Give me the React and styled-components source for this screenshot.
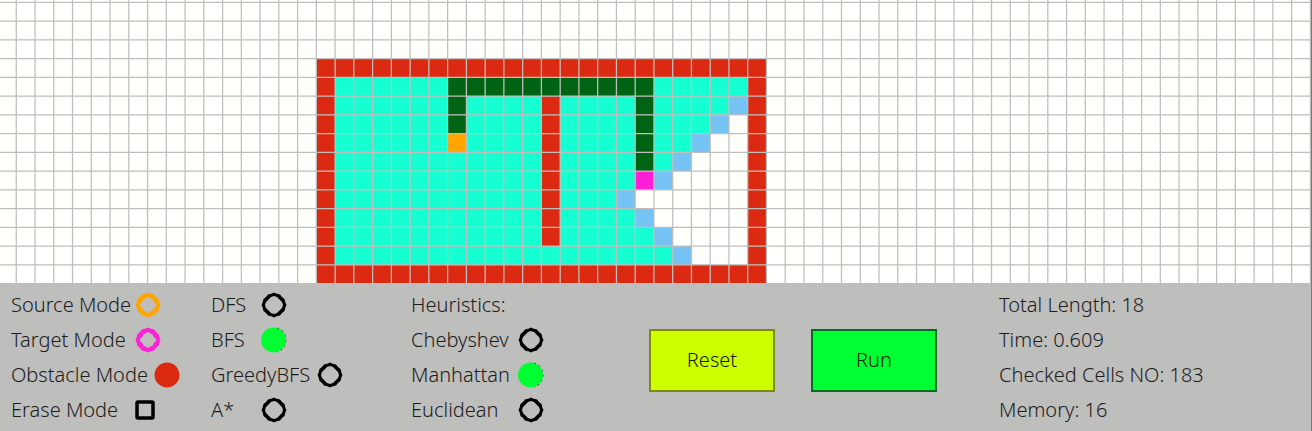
import React, { useState } from "react";
import styled, { createGlobalStyle } from "styled-components";

const GlobalStyle = createGlobalStyle`
  * { box-sizing: border-box; }
  body {
    margin: 0;
    background: #bebebc;
    color: #1c1c1c;
    font-family: "Noto Sans", "Open Sans", sans-serif;
    font-size: 20px;
    font-weight: 300;
  }
`;

const Page = styled.main`
  display: flex;
  flex-direction: column;
  min-height: 100vh;
  border-right: 1px solid #777777;
`;

const Board = styled.svg`
  display: block;
  flex: 1 1 0;
  width: 100%;
  min-height: 240px;
  background: #fffffb;
`;

const Panel = styled.form`
  display: grid;
  grid-template-columns: 200fr 200fr 238fr 350fr 312fr;
  padding: 4px 0 4px 11px;
  background: #bebebc;
`;

const Group = styled.fieldset`
  display: flex;
  flex-direction: column;
  min-width: 0;
  margin: 0;
  padding: 0;
  border: 0;
`;

const Row = styled.div`
  display: flex;
  align-items: center;
  height: 35px;
  line-height: 24px;
  white-space: nowrap;
`;

const Option = styled(Row).attrs({ as: "label" })`
  cursor: pointer;
`;

const Caption = styled.span`
  flex: none;
  width: ${(p) => p.$width}px;
`;

const Mark = styled.span`
  position: relative;
  display: flex;
  flex: none;
  color: ${(p) => p.$color};

  input {
    position: absolute;
    inset: 0;
    width: 100%;
    height: 100%;
    margin: 0;
    opacity: 0;
    cursor: pointer;
  }
`;

const Actions = styled.div`
  display: flex;
  align-items: flex-start;
  gap: 36px;
  padding-top: 42px;
`;

const ActionButton = styled.button`
  width: 126px;
  height: 63px;
  padding: 0 0 2px;
  border: 2px solid ${(p) => p.$edge};
  background: ${(p) => p.$fill};
  color: #102000;
  font: inherit;
  cursor: pointer;
`;

/* Board colours, one letter for each cell state. */
const CELL_COLORS = {
  R: "#dc2a12",
  c: "#16ffd2",
  P: "#006414",
  S: "#ffa500",
  T: "#ff1fd6",
  b: "#75c3f4",
};

const CELLS = [
  "RRRRRRRRRRRRRRRRRRRRRRRR",
  "RccccccPPPPPPPPPPPcccccR",
  "RccccccPccccRccccPccccbR",
  "RccccccPccccRccccPcccb.R",
  "RccccccSccccRccccPccb..R",
  "RcccccccccccRccccPcb...R",
  "RcccccccccccRccccTb....R",
  "RcccccccccccRcccb......R",
  "RcccccccccccRccccb.....R",
  "RcccccccccccRcccccb....R",
  "Rccccccccccccccccccb...R",
  "RRRRRRRRRRRRRRRRRRRRRRRR",
];

const CELL = 30;
const LEFT = 26;
const TOP = 4;
const FIRST_COL = 16;
const FIRST_ROW = 3;
const WIDTH = 2097;
const HEIGHT = 453;

function Grid() {
  const columns = Array.from({ length: 70 }, (_, i) => LEFT + i * CELL);
  const rows = Array.from({ length: 16 }, (_, i) => TOP + i * CELL);
  return (
    <Board
      viewBox={`0 0 ${WIDTH} ${HEIGHT}`}
      preserveAspectRatio="xMidYMax slice"
      role="img"
      aria-label="Search grid"
    >
      {CELLS.flatMap((line, r) =>
        [...line].map((state, c) =>
          CELL_COLORS[state] ? (
            <rect
              key={`${r}-${c}`}
              x={LEFT + (FIRST_COL + c) * CELL}
              y={TOP + (FIRST_ROW + r) * CELL}
              width={CELL}
              height={CELL}
              fill={CELL_COLORS[state]}
            />
          ) : null
        )
      )}
      <g stroke="#bebebc" strokeWidth="2">
        {columns.map((x) => (
          <line key={x} x1={x} x2={x} y1="0" y2={HEIGHT} />
        ))}
        {rows.map((y) => (
          <line key={y} x1="0" x2={WIDTH} y1={y} y2={y} />
        ))}
      </g>
    </Board>
  );
}

const RING_OUTER =
  "M11 1.5 13 .5 15 1.5 19 2.500 21 5 23.500 7 24.500 11 25.500 13 24.500 15 23.500 19 21 21 19 23.500 15 24.500 13 25.500 11 24.500 7 23.500 5 21 2.500 19 1.500 15 .5 13 1.500 11 2.500 7 5 5 7 2.500Z ";
const RING_THIN =
  "M13 4 10 5 7.500 7.500 5 10 4 13 5 16 7.500 18.500 10 21 13 22 16 21 18.500 18.500 21 16 22 13 21 10 18.500 7.500 16 5Z";
const RING_BOLD =
  "M13 4.500 11 6.500 8.500 7 8 9 6.500 10.500 4.500 13 6.500 15.500 8 17 8.500 19 11 19.500 13 21.500 15 19.500 17.500 19 18 17 19.500 15.500 21.500 13 19.500 10.500 18 9 17.500 7 15 6.500Z";

function Ring({ bold }) {
  return (
    <svg width="26" height="26" viewBox="0 0 26 26" aria-hidden="true">
      <path fill="currentColor" fillRule="evenodd" d={RING_OUTER + (bold ? RING_BOLD : RING_THIN)} />
    </svg>
  );
}

function Disc({ trace }) {
  return (
    <svg width="26" height="26" viewBox="0 0 26 26" aria-hidden="true">
      {trace && (
        <path
          d="M16 1.500A12 12 0 0 1 16 24.500"
          fill="none"
          stroke="#000"
          strokeWidth="1.500"
          strokeDasharray="2 3"
        />
      )}
      <circle cx={trace ? 12.5 : 13} cy="13" r="12.500" fill="currentColor" />
    </svg>
  );
}

function Square({ filled }) {
  return (
    <svg width="20" height="20" viewBox="0 0 20 20" aria-hidden="true">
      <rect
        x="2"
        y="2"
        width="16"
        height="16"
        rx="1"
        fill={filled ? "currentColor" : "none"}
        stroke="currentColor"
        strokeWidth="3.500"
      />
    </svg>
  );
}

function Choice({ name, label, width, color, square, value, onChange }) {
  const checked = value === label;
  const accent = color || (checked && !square ? "#00ff32" : "#000000");
  return (
    <Option>
      <Caption $width={width}>{label}</Caption>
      <Mark $color={accent}>
        {square ? (
          <Square filled={checked} />
        ) : checked ? (
          <Disc trace={!color} />
        ) : (
          <Ring bold={Boolean(color)} />
        )}
        <input type="radio" name={name} checked={checked} onChange={() => onChange(label)} />
      </Mark>
    </Option>
  );
}

export default function App() {
  const [mode, setMode] = useState("Obstacle Mode");
  const [search, setSearch] = useState("BFS");
  const [heuristic, setHeuristic] = useState("Manhattan");
  const modes = { name: "mode", value: mode, onChange: setMode };
  const searches = { name: "search", value: search, onChange: setSearch };
  const heuristics = { name: "heuristic", value: heuristic, onChange: setHeuristic };

  return (
    <>
      <GlobalStyle />
      <Page>
        <Grid />
        <Panel>
          <Group aria-label="Mode">
            <Choice {...modes} label="Source Mode" width={124} color="#ffa500" />
            <Choice {...modes} label="Target Mode" width={124} color="#ff1fd6" />
            <Choice {...modes} label="Obstacle Mode" width={143} color="#dc2a12" />
            <Choice {...modes} label="Erase Mode" width={124} square />
          </Group>
          <Group aria-label="Algorithm">
            <Choice {...searches} label="DFS" width={50} />
            <Choice {...searches} label="BFS" width={50} />
            <Choice {...searches} label="GreedyBFS" width={106} />
            <Choice {...searches} label="A*" width={50} />
          </Group>
          <Group aria-labelledby="heuristics">
            <Row id="heuristics">Heuristics:</Row>
            <Choice {...heuristics} label="Chebyshev" width={107} />
            <Choice {...heuristics} label="Manhattan" width={107} />
            <Choice {...heuristics} label="Euclidean" width={107} />
          </Group>
          <Actions>
            <ActionButton type="button" $fill="#ccff00" $edge="#7f8a0c">Reset</ActionButton>
            <ActionButton type="button" $fill="#00ff32" $edge="#006e22">Run</ActionButton>
          </Actions>
          <div>
            <Row>Total Length: 18</Row>
            <Row>Time: 0.609</Row>
            <Row>Checked Cells NO: 183</Row>
            <Row>Memory: 16</Row>
          </div>
        </Panel>
      </Page>
    </>
  );
}
